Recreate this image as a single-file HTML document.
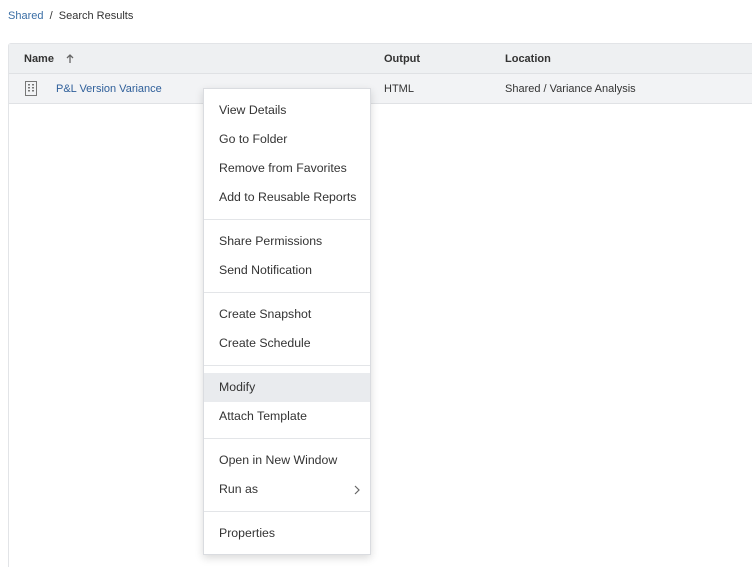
<!DOCTYPE html>
<html><head><style>
*{box-sizing:border-box;margin:0;padding:0}
body{width:752px;height:568px;background:#fff;font-family:"Liberation Sans",Arial,sans-serif;color:#333;position:relative;overflow:hidden}
.bc{position:absolute;left:8px;top:10px;font-size:11px;color:#333}
.bc a{color:#3a6ea5}
.tbl{position:absolute;left:8px;top:43px;width:760px;height:524px;border-left:1px solid #e2e4e7;border-top:1px solid #e2e4e7;border-radius:3px 0 0 0}
.hd{height:30px;background:#eef0f2;border-bottom:1px solid #dfe1e4;font-size:11px;font-weight:bold;color:#333;position:relative}
.row{height:30px;background:#f2f3f5;border-bottom:1px solid #e0e2e5;font-size:11px;position:relative}
.c{position:absolute;top:1px;line-height:29px}
.menu{position:absolute;left:203px;top:88px;width:168px;height:467px;background:#fff;border:1px solid #dadce0;box-shadow:0 3px 8px rgba(0,0,0,.15);padding-top:7px}
.it{height:29px;line-height:29px;padding-left:15px;font-size:12.3px;color:#333;position:relative}
.sep{height:1px;background:#e3e5e8;margin:7px 0 7px}
.hl{background:#e9ebee}
</style></head><body>
<div class="bc"><a>Shared</a>&nbsp; / &nbsp;Search Results</div>
<div class="tbl">
<div class="hd"><span class="c" style="left:15px">Name</span>
<svg class="c" style="left:57px;top:10px" width="8" height="10" viewBox="0 0 8 10"><path d="M4 1V9M1 4L4 1L7 4" stroke="#666" stroke-width="1.3" fill="none"/></svg>
<span class="c" style="left:375px">Output</span><span class="c" style="left:496px">Location</span></div>
<div class="row">
<svg style="position:absolute;left:16px;top:7px" width="12" height="15" viewBox="0 0 12 15"><rect x=".5" y=".5" width="11" height="14" fill="none" stroke="#777"/><g fill="#777"><rect x="3" y="3" width="2" height="1.5"/><rect x="7" y="3" width="2" height="1.5"/><rect x="3" y="6" width="2" height="1.5"/><rect x="7" y="6" width="2" height="1.5"/><rect x="3" y="9" width="2" height="1.5"/><rect x="7" y="9" width="2" height="1.5"/></g></svg>
<span class="c" style="left:47px;color:#2f5f9a">P&amp;L Version Variance</span>
<span class="c" style="left:375px">HTML</span><span class="c" style="left:496px">Shared / Variance Analysis</span></div>
</div>
<div class="menu">
<div class="it">View Details</div><div class="it">Go to Folder</div><div class="it">Remove from Favorites</div><div class="it">Add to Reusable Reports</div>
<div class="sep"></div>
<div class="it">Share Permissions</div><div class="it">Send Notification</div>
<div class="sep"></div>
<div class="it">Create Snapshot</div><div class="it">Create Schedule</div>
<div class="sep"></div>
<div class="it hl">Modify</div><div class="it">Attach Template</div>
<div class="sep"></div>
<div class="it">Open in New Window</div><div class="it">Run as<svg style="position:absolute;right:10px;top:10px" width="6" height="10" viewBox="0 0 6 10"><path d="M1 1L5 5L1 9" stroke="#666" stroke-width="1.2" fill="none"/></svg></div>
<div class="sep"></div>
<div class="it">Properties</div>
</div>
</body></html>
